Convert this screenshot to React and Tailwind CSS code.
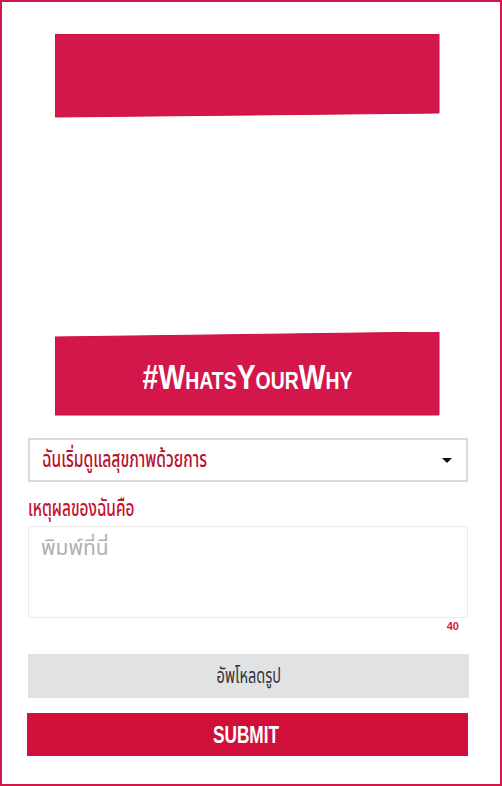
import React from "react";

const thai = { fontFamily: '"Noto Sans Thai", "Noto Sans", "Liberation Sans", sans-serif' };

function Banner({ slant, children }) {
  return (
    <div className="relative mx-[53px] h-[84px] w-[385px]">
      <svg className="absolute inset-0" width="385" height="84" viewBox="0 0 385 84">
        {slant === "bottom" ? (
          <polygon points="0,0 384,0 384,79 0,83" fill="#d4174a" stroke="#cf0f3f" strokeWidth="1" />
        ) : (
          <polygon points="0,5 384,0 384,83 0,83" fill="#d4174a" stroke="#cf0f3f" strokeWidth="1" />
        )}
      </svg>
      <div className="relative flex h-full items-center justify-center pt-[4px]">{children}</div>
    </div>
  );
}

export default function App() {
  return (
    <div className="flex h-[786px] w-[502px] flex-col border-2 border-[#d4174a] bg-white">
      <div className="pt-[32px]">
        <Banner slant="bottom" />
      </div>
      <div className="mt-[214px]">
        <Banner slant="top">
          <div
            className="inline-flex scale-x-[0.81] items-baseline font-bold text-white"
            style={{ fontFamily: '"Liberation Sans", Arial, sans-serif' }}
          >
            <span className="text-[35px] leading-none">#W</span>
            <span className="text-[24px] leading-none">HATS</span>
            <span className="text-[35px] leading-none">Y</span>
            <span className="text-[24px] leading-none">OUR</span>
            <span className="text-[35px] leading-none">W</span>
            <span className="text-[24px] leading-none">HY</span>
          </div>
        </Banner>
      </div>

      <div className="mx-[26px] mt-[22px] flex flex-col">
        <div className="flex h-[44px] w-[440px] items-center justify-between border-2 border-[#dcdad6] pl-[12px] pr-[14px]">
          <span
            className="inline-block origin-left scale-x-[0.68] whitespace-nowrap text-[23px] leading-[30px] font-medium text-[#b8122f]"
            style={thai}
          >
            ฉันเริ่มดูแลสุขภาพด้วยการ
          </span>
          <svg width="10" height="5" viewBox="0 0 10 5">
            <polygon points="0,0 10,0 5,5" fill="#111" />
          </svg>
        </div>

        <div className="mt-[12px] h-[30px] leading-[30px]">
          <span
            className="inline-block origin-left scale-x-[0.67] whitespace-nowrap text-[23px] font-medium text-[#c8102e]"
            style={thai}
          >
            เหตุผลของฉันคือ
          </span>
        </div>

        <div className="mt-[2px] h-[92px] w-[440px] border border-[#ececec] px-[12px] pt-[6px]">
          <span className="text-[21px] text-[#b0b0b0]" style={thai}>
            พิมพ์ที่นี่
          </span>
        </div>

        <div className="flex justify-end pr-[15px]">
          <span
            className="text-[11px] font-bold leading-[16px] text-[#d4174a]"
            style={{ fontFamily: '"Liberation Sans", sans-serif' }}
          >
            40
          </span>
        </div>

        <div className="mt-[20px] flex h-[44px] w-[441px] items-center justify-center bg-[#e1e2e4]">
          <span
            className="inline-block scale-x-[0.66] whitespace-nowrap text-[22px] text-[#333]"
            style={thai}
          >
            อัพโหลดรูป
          </span>
        </div>

        <div className="-ml-px mt-[15px] flex h-[43px] w-[441px] items-center justify-center border border-[#e0102f] bg-[#d0103a]">
          <span
            className="inline-block -translate-x-[2px] scale-x-[0.72] text-[24px] font-bold text-white"
            style={{ fontFamily: '"Liberation Sans", sans-serif' }}
          >
            SUBMIT
          </span>
        </div>
      </div>
    </div>
  );
}
